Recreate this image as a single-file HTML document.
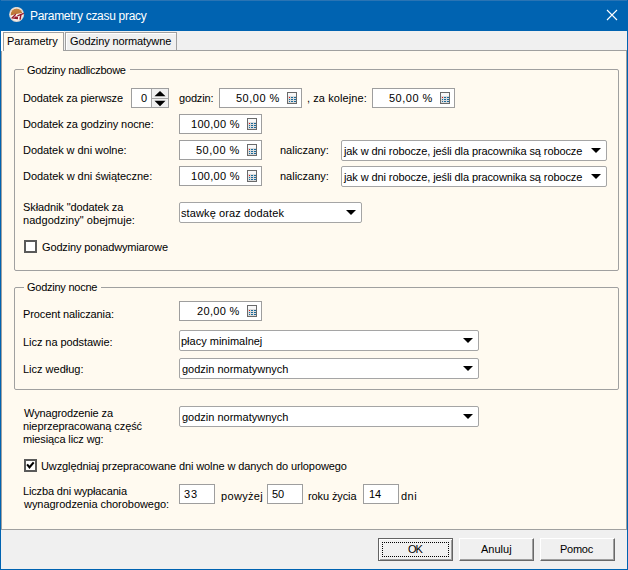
<!DOCTYPE html>
<html><head><meta charset="utf-8"><title>Parametry czasu pracy</title><style>
*{margin:0;padding:0;box-sizing:border-box}
html,body{width:628px;height:570px;overflow:hidden;background:#f0f0f0}
body{position:relative;font-family:"Liberation Sans",sans-serif;font-size:11px;color:#000}
.a{position:absolute}
.t{position:absolute;white-space:pre;line-height:13px;font-size:11px}
.ed{position:absolute;background:#fff;border:1px solid #9e9e9e}
.cb{position:absolute;background:#fff;border:1px solid #a5a5a5;border-radius:2px}
.arr{position:absolute;width:0;height:0;border-left:5px solid transparent;border-right:5px solid transparent;border-top:5px solid #000}
.calc{position:absolute;width:10px;height:12px}
.gb{position:absolute;border:1px solid #a0a0a0;border-radius:2px}
.chk{position:absolute;width:13px;height:13px;border:2px solid #5a5a5a;background:#fff}
.btn{position:absolute;width:75px;height:23px;background:#f0f0f0}
</style></head>
<body>
<div class="a" style="left:0;top:0;width:628px;height:31px;background:#0063b1"></div>
<div class="a" style="left:0;top:0;width:628px;height:1px;background:#2a74b4"></div>
<div class="a" style="left:0;top:0;width:1px;height:570px;background:#0063b1"></div>
<div class="a" style="left:627px;top:0;width:1px;height:570px;background:#0063b1"></div>
<div class="a" style="left:0;top:569px;width:628px;height:1px;background:#0063b1"></div>
<svg class="a" style="left:9px;top:7px" width="16" height="16" viewBox="0 0 16 16">
<defs><clipPath id="ic"><circle cx="7.6" cy="7.4" r="5.9"/></clipPath>
<linearGradient id="ig" x1="0" y1="0" x2="0" y2="1"><stop offset="0" stop-color="#c98a4a"/><stop offset="1" stop-color="#b86e30"/></linearGradient></defs>
<circle cx="7.6" cy="7.4" r="7.5" fill="#ddd6d0"/>
<circle cx="7.6" cy="7.4" r="6.3" fill="#fbf8f6"/>
<path clip-path="url(#ic)" d="M0 9.4 Q5 7 16 5.6 L16 0 L0 0 Z" fill="url(#ig)"/>
<path d="M6.8 7.3 L3 10.9 L8.4 11.6 L8.3 10.2 L5.6 10.2" fill="none" stroke="#98182a" stroke-width="1.3" stroke-linejoin="round"/>
<path d="M8.4 8.9 L14.8 6.3" fill="none" stroke="#98182a" stroke-width="1.3"/>
<path d="M11.9 7.8 L11 12.6" fill="none" stroke="#98182a" stroke-width="1.5"/>
</svg>
<div class="t" style="left:30px;top:9px;font-size:12px;line-height:14px;color:#fff;letter-spacing:-0.3px">Parametry czasu pracy</div>
<svg class="a" style="left:606px;top:9px" width="12" height="12" viewBox="0 0 12 12"><path d="M1 1 L11 11 M11 1 L1 11" stroke="#fff" stroke-width="1.1"/></svg>
<div class="a" style="left:1px;top:50px;width:626px;height:480px;background:#fffaf0;border:1px solid #a0a0a0"></div>
<div class="a" style="left:1px;top:31px;width:63px;height:20px;background:#fff"></div>
<div class="a" style="left:3px;top:32px;width:61px;height:19px;background:#fffaf0;border-left:1px solid #a0a0a0;border-top:1px solid #a0a0a0;border-right:1px solid #a0a0a0"></div>
<div class="a" style="left:65px;top:32px;width:112px;height:19px;background:#f0f0f0;border:1px solid #a0a0a0;box-shadow:inset 1px 1px 0 #fff"></div>
<div class="gb" style="left:14px;top:69px;width:605px;height:202px"></div>
<div class="a" style="left:24px;top:66px;width:106px;height:8px;background:#fffaf0"></div>
<div class="gb" style="left:14px;top:287px;width:605px;height:103px"></div>
<div class="a" style="left:24px;top:284px;width:77px;height:8px;background:#fffaf0"></div>
<div class="ed" style="left:131px;top:88px;width:38px;height:20px"></div>
<div class="a" style="left:151px;top:89px;width:1px;height:18px;background:#a5a5a5"></div>
<div class="a" style="left:152px;top:89px;width:16px;height:18px;background:#f0f0f0"></div>
<div class="a" style="left:152px;top:98px;width:16px;height:1px;background:#a5a5a5"></div>
<svg class="a" style="left:154px;top:90px" width="12" height="17" viewBox="0 0 12 17"><path d="M0.5 6.3 L6 0.9 L11.5 6.3Z M0.5 10.8 L11.5 10.8 L6 16.2Z" fill="#000"/></svg>
<div class="ed" style="left:219px;top:88px;width:83px;height:20px"></div>
<svg class="a" style="left:287px;top:92px" width="10" height="12" viewBox="0 0 10 12">
<rect x="0.5" y="0.5" width="9" height="11" fill="#dcdcdc" stroke="#6a6a6a"/>
<rect x="1" y="1" width="8" height="3" fill="#f8f8f8"/>
<rect x="2" y="5" width="1" height="1" fill="#e01010"/>
<rect x="4" y="5" width="2" height="1" fill="#1a6a9a"/><rect x="7" y="5" width="2" height="1" fill="#1a6a9a"/>
<rect x="2" y="7" width="1" height="1" fill="#1a6a9a"/><rect x="4" y="7" width="2" height="1" fill="#1a6a9a"/><rect x="7" y="7" width="2" height="1" fill="#1a6a9a"/>
<rect x="2" y="9" width="1" height="1" fill="#1a6a9a"/><rect x="4" y="9" width="2" height="1" fill="#1a6a9a"/><rect x="7" y="9" width="2" height="1" fill="#1a6a9a"/>
</svg>
<div class="ed" style="left:372px;top:88px;width:83px;height:20px"></div>
<svg class="a" style="left:440px;top:92px" width="10" height="12" viewBox="0 0 10 12">
<rect x="0.5" y="0.5" width="9" height="11" fill="#dcdcdc" stroke="#6a6a6a"/>
<rect x="1" y="1" width="8" height="3" fill="#f8f8f8"/>
<rect x="2" y="5" width="1" height="1" fill="#e01010"/>
<rect x="4" y="5" width="2" height="1" fill="#1a6a9a"/><rect x="7" y="5" width="2" height="1" fill="#1a6a9a"/>
<rect x="2" y="7" width="1" height="1" fill="#1a6a9a"/><rect x="4" y="7" width="2" height="1" fill="#1a6a9a"/><rect x="7" y="7" width="2" height="1" fill="#1a6a9a"/>
<rect x="2" y="9" width="1" height="1" fill="#1a6a9a"/><rect x="4" y="9" width="2" height="1" fill="#1a6a9a"/><rect x="7" y="9" width="2" height="1" fill="#1a6a9a"/>
</svg>
<div class="ed" style="left:179px;top:114px;width:83px;height:20px"></div>
<svg class="a" style="left:247px;top:118px" width="10" height="12" viewBox="0 0 10 12">
<rect x="0.5" y="0.5" width="9" height="11" fill="#dcdcdc" stroke="#6a6a6a"/>
<rect x="1" y="1" width="8" height="3" fill="#f8f8f8"/>
<rect x="2" y="5" width="1" height="1" fill="#e01010"/>
<rect x="4" y="5" width="2" height="1" fill="#1a6a9a"/><rect x="7" y="5" width="2" height="1" fill="#1a6a9a"/>
<rect x="2" y="7" width="1" height="1" fill="#1a6a9a"/><rect x="4" y="7" width="2" height="1" fill="#1a6a9a"/><rect x="7" y="7" width="2" height="1" fill="#1a6a9a"/>
<rect x="2" y="9" width="1" height="1" fill="#1a6a9a"/><rect x="4" y="9" width="2" height="1" fill="#1a6a9a"/><rect x="7" y="9" width="2" height="1" fill="#1a6a9a"/>
</svg>
<div class="ed" style="left:179px;top:140px;width:83px;height:20px"></div>
<svg class="a" style="left:247px;top:144px" width="10" height="12" viewBox="0 0 10 12">
<rect x="0.5" y="0.5" width="9" height="11" fill="#dcdcdc" stroke="#6a6a6a"/>
<rect x="1" y="1" width="8" height="3" fill="#f8f8f8"/>
<rect x="2" y="5" width="1" height="1" fill="#e01010"/>
<rect x="4" y="5" width="2" height="1" fill="#1a6a9a"/><rect x="7" y="5" width="2" height="1" fill="#1a6a9a"/>
<rect x="2" y="7" width="1" height="1" fill="#1a6a9a"/><rect x="4" y="7" width="2" height="1" fill="#1a6a9a"/><rect x="7" y="7" width="2" height="1" fill="#1a6a9a"/>
<rect x="2" y="9" width="1" height="1" fill="#1a6a9a"/><rect x="4" y="9" width="2" height="1" fill="#1a6a9a"/><rect x="7" y="9" width="2" height="1" fill="#1a6a9a"/>
</svg>
<div class="ed" style="left:179px;top:166px;width:83px;height:20px"></div>
<svg class="a" style="left:247px;top:170px" width="10" height="12" viewBox="0 0 10 12">
<rect x="0.5" y="0.5" width="9" height="11" fill="#dcdcdc" stroke="#6a6a6a"/>
<rect x="1" y="1" width="8" height="3" fill="#f8f8f8"/>
<rect x="2" y="5" width="1" height="1" fill="#e01010"/>
<rect x="4" y="5" width="2" height="1" fill="#1a6a9a"/><rect x="7" y="5" width="2" height="1" fill="#1a6a9a"/>
<rect x="2" y="7" width="1" height="1" fill="#1a6a9a"/><rect x="4" y="7" width="2" height="1" fill="#1a6a9a"/><rect x="7" y="7" width="2" height="1" fill="#1a6a9a"/>
<rect x="2" y="9" width="1" height="1" fill="#1a6a9a"/><rect x="4" y="9" width="2" height="1" fill="#1a6a9a"/><rect x="7" y="9" width="2" height="1" fill="#1a6a9a"/>
</svg>
<div class="cb" style="left:341px;top:140px;width:266px;height:21px"></div>
<div class="arr" style="left:591px;top:148px"></div>
<div class="cb" style="left:341px;top:166px;width:266px;height:21px"></div>
<div class="arr" style="left:591px;top:174px"></div>
<div class="cb" style="left:179px;top:202px;width:183px;height:21px"></div>
<div class="arr" style="left:346px;top:210px"></div>
<div class="chk" style="left:24px;top:240px"></div>
<div class="ed" style="left:179px;top:301px;width:83px;height:20px"></div>
<svg class="a" style="left:247px;top:305px" width="10" height="12" viewBox="0 0 10 12">
<rect x="0.5" y="0.5" width="9" height="11" fill="#dcdcdc" stroke="#6a6a6a"/>
<rect x="1" y="1" width="8" height="3" fill="#f8f8f8"/>
<rect x="2" y="5" width="1" height="1" fill="#e01010"/>
<rect x="4" y="5" width="2" height="1" fill="#1a6a9a"/><rect x="7" y="5" width="2" height="1" fill="#1a6a9a"/>
<rect x="2" y="7" width="1" height="1" fill="#1a6a9a"/><rect x="4" y="7" width="2" height="1" fill="#1a6a9a"/><rect x="7" y="7" width="2" height="1" fill="#1a6a9a"/>
<rect x="2" y="9" width="1" height="1" fill="#1a6a9a"/><rect x="4" y="9" width="2" height="1" fill="#1a6a9a"/><rect x="7" y="9" width="2" height="1" fill="#1a6a9a"/>
</svg>
<div class="cb" style="left:179px;top:330px;width:300px;height:21px"></div>
<div class="arr" style="left:463px;top:338px"></div>
<div class="cb" style="left:179px;top:358px;width:300px;height:21px"></div>
<div class="arr" style="left:463px;top:366px"></div>
<div class="cb" style="left:179px;top:406px;width:300px;height:21px"></div>
<div class="arr" style="left:463px;top:414px"></div>
<div class="chk" style="left:24px;top:459px"></div>
<svg class="a" style="left:24px;top:459px" width="13" height="13" viewBox="0 0 13 13"><path d="M3.1 5.4 L5.5 8.3 L9.7 3.4" fill="none" stroke="#000" stroke-width="2.1" stroke-linejoin="miter"/></svg>
<div class="ed" style="left:179px;top:484px;width:36px;height:20px"></div>
<div class="ed" style="left:267px;top:484px;width:36px;height:20px"></div>
<div class="ed" style="left:363px;top:484px;width:36px;height:20px"></div>
<div class="btn" style="left:378px;top:538px;border:1px solid #646464;box-shadow:inset 1px 1px 0 #fff, inset -1px -1px 0 #a0a0a0"></div>
<div class="a" style="left:382px;top:542px;width:67px;height:15px;border:1px dotted #000"></div>
<div class="btn" style="left:459px;top:538px;border-left:1px solid #fff;border-top:1px solid #fff;border-right:1px solid #696969;border-bottom:1px solid #696969;box-shadow:inset -1px -1px 0 #a0a0a0"></div>
<div class="btn" style="left:540px;top:538px;border-left:1px solid #fff;border-top:1px solid #fff;border-right:1px solid #696969;border-bottom:1px solid #696969;box-shadow:inset -1px -1px 0 #a0a0a0"></div>
<div class="t" style="left:7px;top:35px">Parametry</div>
<div class="t" style="left:70px;top:35px;letter-spacing:-0.118px">Godziny normatywne</div>
<div class="t" style="left:27px;top:64px;letter-spacing:-0.278px">Godziny nadliczbowe</div>
<div class="t" style="left:23px;top:92px;letter-spacing:-0.111px">Dodatek za pierwsze</div>
<div class="t" style="left:141px;top:92px">0</div>
<div class="t" style="left:179px;top:92px;letter-spacing:-0.167px">godzin:</div>
<div class="t" style="left:236px;top:92px;letter-spacing:0.5px">50,00 %</div>
<div class="t" style="left:307px;top:92px;letter-spacing:0.083px">, za kolejne:</div>
<div class="t" style="left:389px;top:92px;letter-spacing:0.5px">50,00 %</div>
<div class="t" style="left:23px;top:118px;letter-spacing:-0.083px">Dodatek za godziny nocne:</div>
<div class="t" style="left:191px;top:118px;letter-spacing:0.286px">100,00 %</div>
<div class="t" style="left:23px;top:144px;letter-spacing:-0.053px">Dodatek w dni wolne:</div>
<div class="t" style="left:196px;top:144px;letter-spacing:0.5px">50,00 %</div>
<div class="t" style="left:280px;top:144px">naliczany:</div>
<div class="t" style="left:344px;top:145px;letter-spacing:-0.102px">jak w dni robocze, jeśli dla pracownika są robocze</div>
<div class="t" style="left:23px;top:170px;letter-spacing:-0.042px">Dodatek w dni świąteczne:</div>
<div class="t" style="left:191px;top:170px;letter-spacing:0.286px">100,00 %</div>
<div class="t" style="left:280px;top:170px">naliczany:</div>
<div class="t" style="left:344px;top:171px;letter-spacing:-0.102px">jak w dni robocze, jeśli dla pracownika są robocze</div>
<div class="t" style="left:23px;top:201px;letter-spacing:-0.105px">Składnik "dodatek za</div>
<div class="t" style="left:23px;top:214px;letter-spacing:0.05px">nadgodziny" obejmuje:</div>
<div class="t" style="left:181px;top:207px;letter-spacing:0.111px">stawkę oraz dodatek</div>
<div class="t" style="left:42px;top:241px;letter-spacing:-0.143px">Godziny ponadwymiarowe</div>
<div class="t" style="left:27px;top:281px;letter-spacing:-0.25px">Godziny nocne</div>
<div class="t" style="left:23px;top:308px;letter-spacing:-0.111px">Procent naliczania:</div>
<div class="t" style="left:197px;top:305px;letter-spacing:0.333px">20,00 %</div>
<div class="t" style="left:23px;top:336px;letter-spacing:-0.059px">Licz na podstawie:</div>
<div class="t" style="left:181px;top:335px">płacy minimalnej</div>
<div class="t" style="left:23px;top:363px">Licz według:</div>
<div class="t" style="left:182px;top:363px">godzin normatywnych</div>
<div class="t" style="left:24px;top:407px;letter-spacing:-0.133px">Wynagrodzenie za</div>
<div class="t" style="left:23px;top:420px;letter-spacing:-0.095px">nieprzepracowaną część</div>
<div class="t" style="left:23px;top:433px;letter-spacing:-0.125px">miesiąca licz wg:</div>
<div class="t" style="left:182px;top:411px">godzin normatywnych</div>
<div class="t" style="left:41px;top:460px;letter-spacing:-0.105px">Uwzględniaj przepracowane dni wolne w danych do urlopowego</div>
<div class="t" style="left:23px;top:485px;letter-spacing:-0.15px">Liczba dni wypłacania</div>
<div class="t" style="left:24px;top:498px;letter-spacing:-0.04px">wynagrodzenia chorobowego:</div>
<div class="t" style="left:184px;top:488px;letter-spacing:1.0px">33</div>
<div class="t" style="left:221px;top:490px;letter-spacing:0.333px">powyżej</div>
<div class="t" style="left:272px;top:488px">50</div>
<div class="t" style="left:308px;top:490px;letter-spacing:-0.111px">roku życia</div>
<div class="t" style="left:369px;top:488px">14</div>
<div class="t" style="left:401px;top:490px;letter-spacing:0.5px">dni</div>
<div class="t" style="left:408px;top:543px;letter-spacing:-1.0px">OK</div>
<div class="t" style="left:481px;top:543px">Anuluj</div>
<div class="t" style="left:560px;top:543px;letter-spacing:-0.25px">Pomoc</div>
</body></html>
